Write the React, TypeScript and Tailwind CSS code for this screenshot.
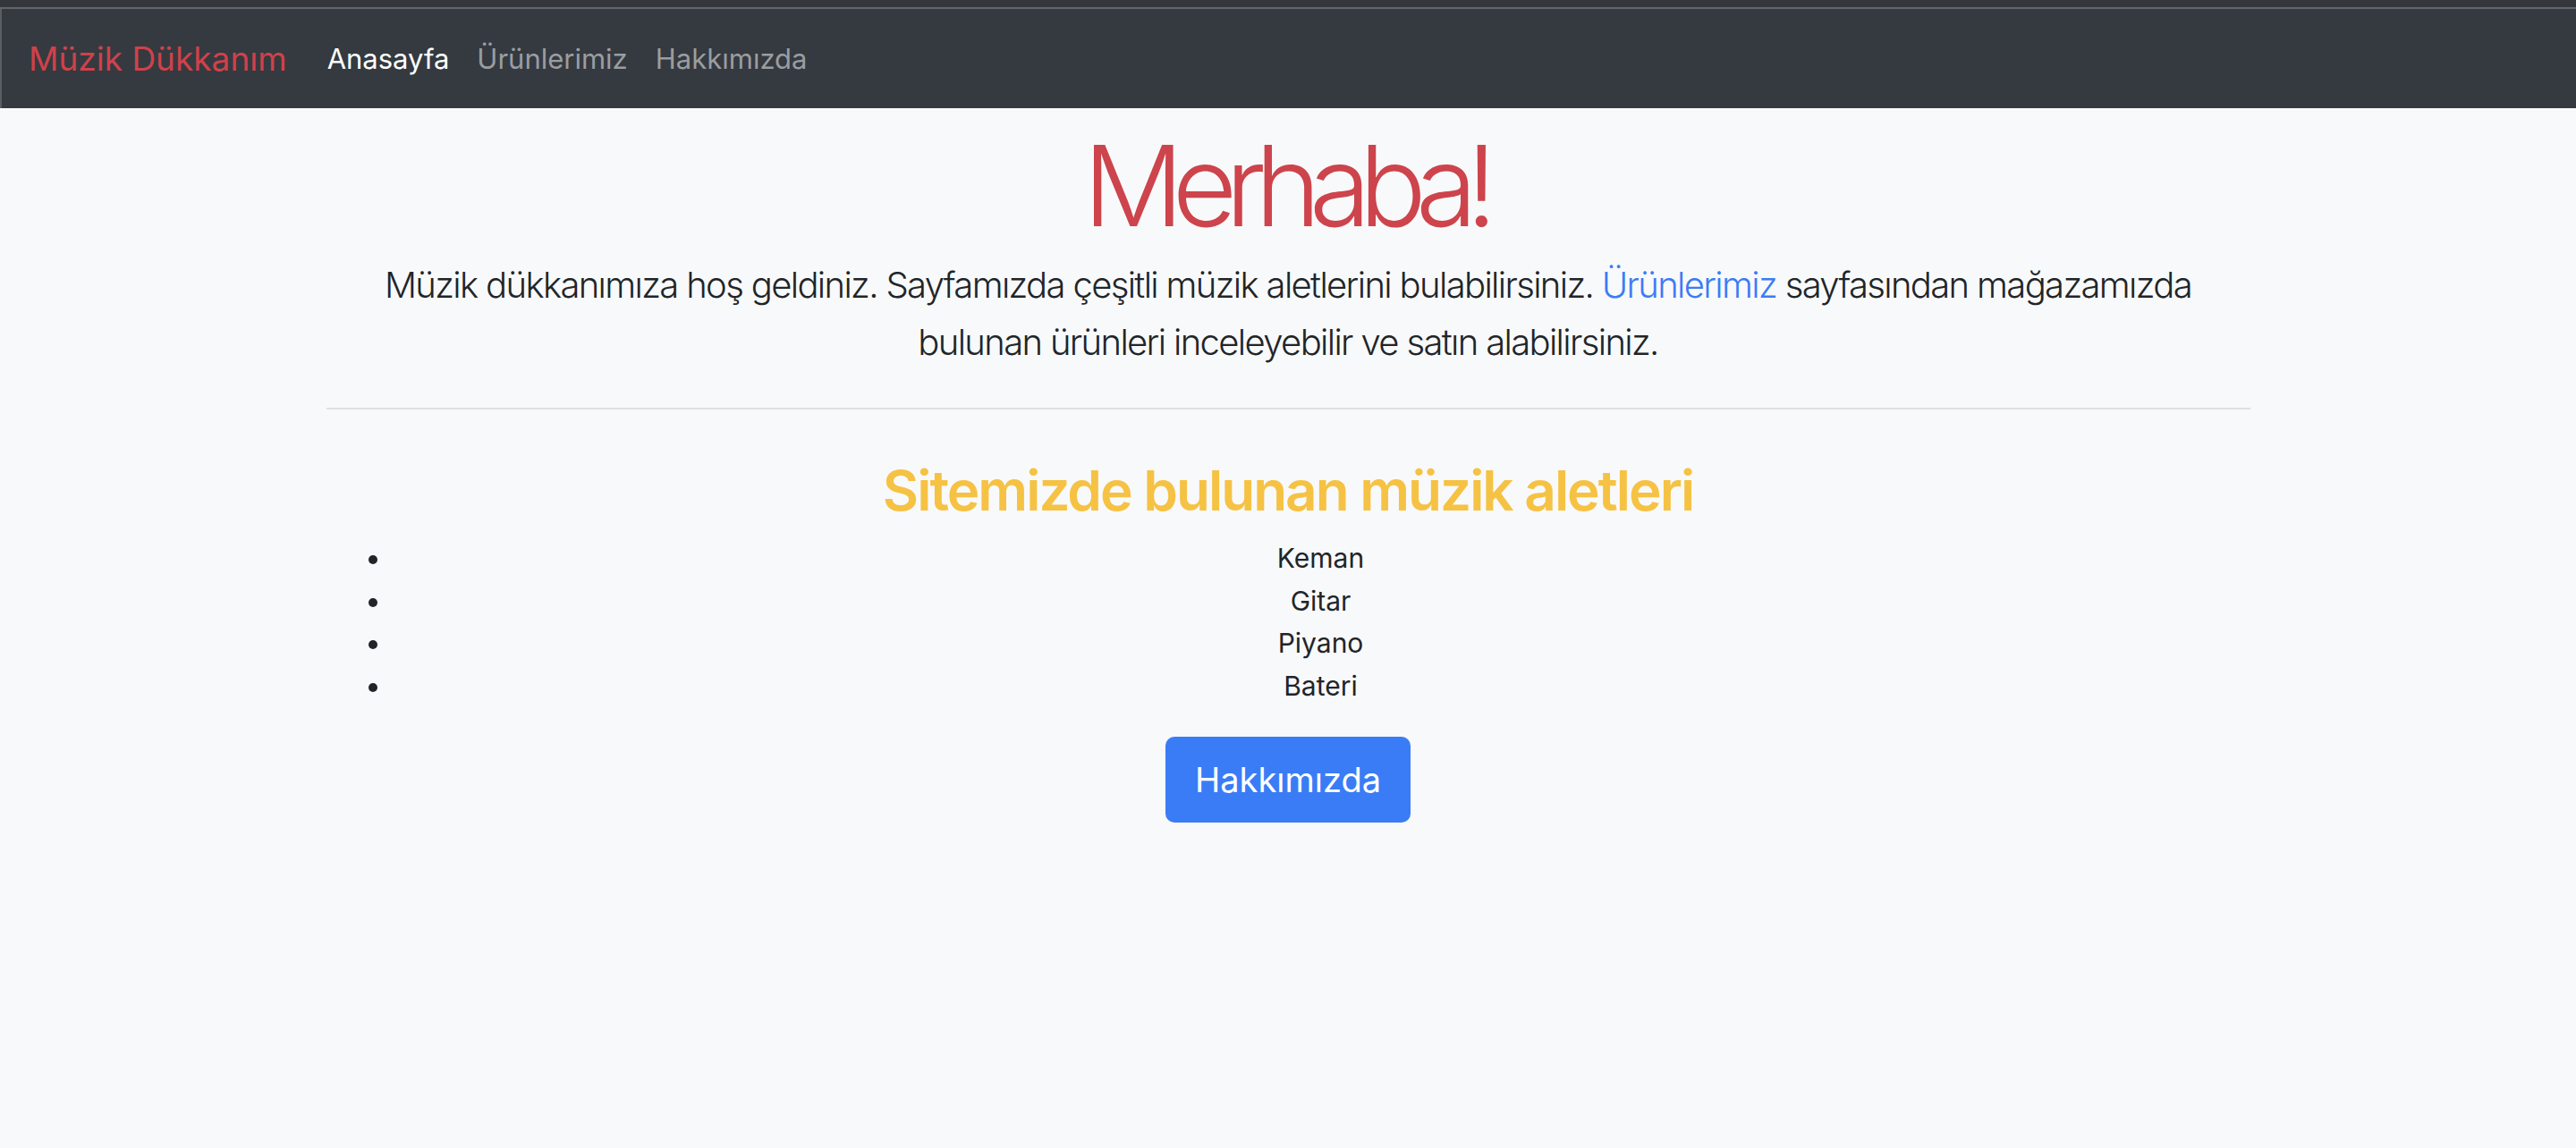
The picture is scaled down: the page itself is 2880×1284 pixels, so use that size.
export default function App() {
  const items = ["Keman", "Gitar", "Piyano", "Bateri"];

  return (
    <div className="min-h-[1284px] bg-[#f8f9fa] font-['Inter','Noto_Sans',sans-serif] text-[#212529]">
      {/* top strip */}
      <div className="h-[8px] bg-[#33373c]" />
      <div className="h-[2px] bg-[#63676b]" />

      {/* navbar */}
      <nav className="flex h-[111px] items-center border-l-2 border-[#5a5e63] bg-[#343a40] pl-[30px]">
        <a href="#" className="mr-[45px] text-[37px] leading-none text-[#d0414a]">
          Müzik Dükkanım
        </a>
        <ul className="flex items-center gap-[31px] text-[31px] leading-none">
          <li>
            <a href="#" className="text-white">
              Anasayfa
            </a>
          </li>
          <li>
            <a href="#" className="text-[#9a9da1]">
              Ürünlerimiz
            </a>
          </li>
          <li>
            <a href="#" className="text-[#9a9da1]">
              Hakkımızda
            </a>
          </li>
        </ul>
      </nav>

      {/* content */}
      <main className="mx-auto w-[2151px] text-center">
        <h1 className="mt-[12px] pr-[8px] text-[125px] leading-[150px] font-light tracking-[-13px] text-[#cd444c]">
          Merhaba!
        </h1>
        <p className="mx-auto mt-[4px] w-[2040px] text-[40px] leading-[64px] font-light tracking-[-1.65px]">
          Müzik dükkanımıza hoş geldiniz. Sayfamızda çeşitli müzik aletlerini
          bulabilirsiniz. <a href="#" className="text-[#3b7cf6]">Ürünlerimiz</a>{" "}
          sayfasından mağazamızda bulunan ürünleri inceleyebilir ve satın
          alabilirsiniz.
        </p>

        <hr className="mt-[41px] border-t-2 border-[#dfe0e2]" />

        <h2 className="mt-[54px] text-[62px] leading-[74px] font-semibold tracking-[-2px] text-[#f6c244]">
          Sitemizde bulunan müzik aletleri
        </h2>

        <ul className="mt-[15px] list-disc pl-[73px] text-[30px] leading-[47.5px]">
          {items.map((item) => (
            <li key={item}>{item}</li>
          ))}
        </ul>

        <button className="mt-[33px] rounded-[10px] bg-[#3a7cf6] px-[33px] py-[20px] text-[38px] leading-[56px] text-white">
          Hakkımızda
        </button>
      </main>
    </div>
  );
}
